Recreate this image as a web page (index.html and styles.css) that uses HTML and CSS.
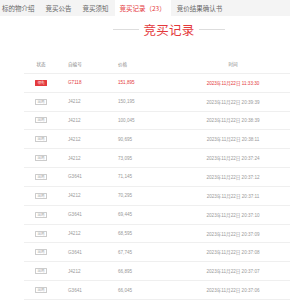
FILE: index.html
```html
<!DOCTYPE html>
<html lang="zh-CN">
<head>
    <meta charset="UTF-8">
    <meta name="viewport" content="width=device-width, initial-scale=1.0">
    <title>竞买记录</title>
    <link rel="stylesheet" href="styles.css">
</head>
<body>
    <div class="tabs">
        <span class="tab">标的物介绍</span>
        <span class="tab">竞买公告</span>
        <span class="tab">竞买须知</span>
        <span class="tab active">竞买记录（23）</span>
        <span class="tab">竞价结果确认书</span>
    </div>

    <div class="title">
        <span class="line"></span>
        <h2>竞买记录</h2>
        <span class="line"></span>
    </div>

    <div class="records">
        <div class="row head">
            <span class="c-status">状态</span>
            <span class="c-no">自编号</span>
            <span class="c-price">价格</span>
            <span class="c-time">时间</span>
        </div>
        <div class="row lead">
            <span class="c-status"><i class="badge">领先</i></span>
            <span class="c-no">G7118</span>
            <span class="c-price">151,895</span>
            <span class="c-time">2023年11月22日 11:33:30</span>
        </div>
        <div class="row">
            <span class="c-status"><i class="badge">出局</i></span>
            <span class="c-no">J4212</span>
            <span class="c-price">150,195</span>
            <span class="c-time">2023年11月22日 20:39:39</span>
        </div>
        <div class="row">
            <span class="c-status"><i class="badge">出局</i></span>
            <span class="c-no">J4212</span>
            <span class="c-price">100,045</span>
            <span class="c-time">2023年11月22日 20:38:39</span>
        </div>
        <div class="row">
            <span class="c-status"><i class="badge">出局</i></span>
            <span class="c-no">J4212</span>
            <span class="c-price">90,695</span>
            <span class="c-time">2023年11月22日 20:38:11</span>
        </div>
        <div class="row">
            <span class="c-status"><i class="badge">出局</i></span>
            <span class="c-no">J4212</span>
            <span class="c-price">73,095</span>
            <span class="c-time">2023年11月22日 20:37:24</span>
        </div>
        <div class="row">
            <span class="c-status"><i class="badge">出局</i></span>
            <span class="c-no">G3641</span>
            <span class="c-price">71,145</span>
            <span class="c-time">2023年11月22日 20:37:12</span>
        </div>
        <div class="row">
            <span class="c-status"><i class="badge">出局</i></span>
            <span class="c-no">J4212</span>
            <span class="c-price">70,295</span>
            <span class="c-time">2023年11月22日 20:37:11</span>
        </div>
        <div class="row">
            <span class="c-status"><i class="badge">出局</i></span>
            <span class="c-no">G3641</span>
            <span class="c-price">69,445</span>
            <span class="c-time">2023年11月22日 20:37:10</span>
        </div>
        <div class="row">
            <span class="c-status"><i class="badge">出局</i></span>
            <span class="c-no">J4212</span>
            <span class="c-price">68,595</span>
            <span class="c-time">2023年11月22日 20:37:09</span>
        </div>
        <div class="row">
            <span class="c-status"><i class="badge">出局</i></span>
            <span class="c-no">G3641</span>
            <span class="c-price">67,745</span>
            <span class="c-time">2023年11月22日 20:37:08</span>
        </div>
        <div class="row">
            <span class="c-status"><i class="badge">出局</i></span>
            <span class="c-no">J4212</span>
            <span class="c-price">66,895</span>
            <span class="c-time">2023年11月22日 20:37:07</span>
        </div>
        <div class="row">
            <span class="c-status"><i class="badge">出局</i></span>
            <span class="c-no">G3641</span>
            <span class="c-price">66,045</span>
            <span class="c-time">2023年11月22日 20:37:06</span>
        </div>
    </div>
</body>
</html>
```

FILE: styles.css
```css
html, body {
    overflow: hidden;
}
body {
    margin: 0;
    background-color: #fff;
    font-family: "Noto Sans CJK SC", "Liberation Sans", sans-serif;
    color: #999;
}
.tabs {
    display: flex;
    height: 16px;
    background-color: #f4f4f4;
    padding-left: 2px;
}
.tab {
    font-size: 6.5px;
    line-height: 16px;
    color: #666;
    padding: 0 5px 0 0;
    margin-right: 6px;
    white-space: nowrap;
}
.tab.active {
    background-color: #fff;
    color: #e4393c;
    padding: 0 5px;
    margin-left: -5px;
}
.title {
    display: flex;
    align-items: center;
    justify-content: center;
    gap: 4px;
    padding-left: 48px;
    height: 26px;
}
.title h2 {
    margin: 0;
    font-size: 12.5px;
    font-weight: normal;
    color: #e4393c;
    letter-spacing: 0.3px;
}
.line {
    width: 26px;
    height: 1px;
    background-color: #ddd;
}
.records {
    margin-top: 13px;
    margin-left: 24px;
    width: 270px;
}
.row {
    display: grid;
    grid-template-columns: 34px 60px 54px 1fr;
    align-items: center;
    height: 17.85px;
    border-bottom: 1px solid #efefef;
    font-size: 4.6px;
    color: #999;
    font-family: "Liberation Sans", "Noto Sans CJK SC", sans-serif;
}
.row.head {
    color: #888;
}
.c-status {
    text-align: center;
}
.c-no {
    padding-left: 10px;
}
.c-time {
    text-align: center;
}
.badge {
    display: inline-block;
    font-style: normal;
    font-size: 3.6px;
    line-height: 4px;
    padding: 0 1.5px;
    border: 0.6px solid #ccc;
    border-radius: 0.5px;
    color: #aaa;
}
.row.lead {
    color: #e4393c;
}
.row.lead .badge {
    background-color: #e4393c;
    border-color: #e4393c;
    color: #fff;
}
```
